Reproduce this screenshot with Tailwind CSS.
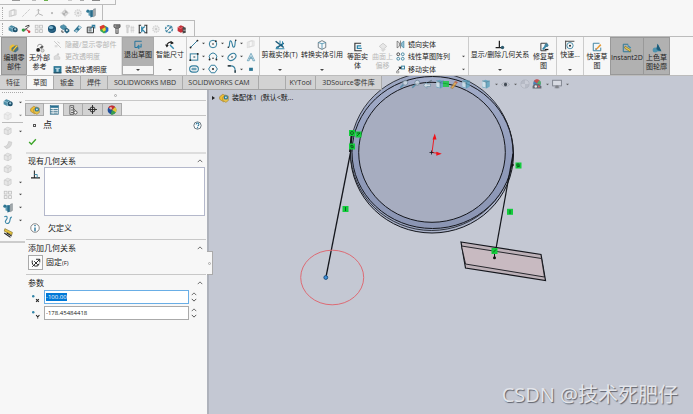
<!DOCTYPE html>
<html lang="zh-CN">
<head>
<meta charset="utf-8">
<title>SOLIDWORKS 草图</title>
<script src="https://cdn.jsdelivr.net/npm/@tailwindcss/browser@4"></script>
</head>
<body class="h-screen overflow-hidden flex flex-col bg-[#f7f7f7] text-[#222] font-['Open_Sans','Noto_Sans_CJK_SC',sans-serif] text-[7px] leading-[10px]">

<svg class="hidden" aria-hidden="true">
  <defs>
    <symbol id="asm" viewBox="0 0 16 16"><path d="M1 5l4-3 6 2v6l-4 3-6-3z" fill="#4b8ca5"/><path d="M1 5l6 2 4-3M7 7v6" stroke="#b9dbe8" fill="none"/><circle cx="11.500" cy="9" r="4" fill="#1d506b"/><circle cx="11.500" cy="8.500" r="1.800" fill="#9cc8d9"/></symbol>
    <symbol id="asmg" viewBox="0 0 16 16"><path d="M2 5l5-3 6 2v7l-5 3-6-2z" fill="#e6e6e6" stroke="#c6c6c6"/><path d="M2 5l6 2 5-3M8 7v7" stroke="#c6c6c6" fill="none"/></symbol>
    <symbol id="wedge" viewBox="0 0 16 16"><path d="M2 12c4 0 6-3 7-8l5 1c0 6-4 10-9 10z" fill="#d9d9d9" stroke="#c4c4c4"/></symbol>
    <symbol id="mate" viewBox="0 0 16 16"><path d="M14 3L8 8 2 9M4 12l5-4" stroke="#555" stroke-width="1.600" fill="none"/><circle cx="3.500" cy="9.500" r="2.400" fill="#2c9f3f"/><path d="M7 4l6-2" stroke="#333" stroke-width="1.600"/><path d="M9 9l5 4" stroke="#d6333b" stroke-width="2"/><circle cx="13" cy="12.500" r="2" fill="#d6333b"/></symbol>
    <symbol id="gridg" viewBox="0 0 16 16"><g fill="#f1f1f1" stroke="#bfbfbf" stroke-width="1.300"><rect x="2" y="2" width="4.500" height="4.500"/><rect x="9" y="2" width="4.500" height="4.500"/><rect x="2" y="9" width="4.500" height="4.500"/><rect x="9" y="9" width="4.500" height="4.500"/></g></symbol>
    <symbol id="fastg" viewBox="0 0 16 16"><path d="M2 2h5v3H5v9H3V5H2z" fill="#dedede" stroke="#c0c0c0"/><path d="M10 3v11M13 3v11M9 6h6M9 10h6" stroke="#c4c4c4"/></symbol>
    <symbol id="globe" viewBox="0 0 16 16"><circle cx="8" cy="8" r="6.500" fill="#1a5273"/><ellipse cx="6.500" cy="5.500" rx="3.500" ry="2.500" fill="#79b4cf"/><path d="M2 10q6 4 12-2" stroke="#4b89a9" fill="none"/></symbol>
    <symbol id="parts" viewBox="0 0 16 16"><path d="M1 3l5-2 4 3v3l-5 2-4-3z" fill="#4f93ad" stroke="#2c6681" stroke-width=".8"/><path d="M7 8l4-2 4 3v3l-4 3-4-3z" fill="#24607d"/><path d="M3 10v3h3" fill="none" stroke="#333" stroke-width="1.400"/><circle cx="11" cy="10" r="1.500" fill="#d9e9ef"/></symbol>
    <symbol id="clip" viewBox="0 0 16 16"><path d="M1 11l8-9 5 3-8 9z" fill="#2e7391"/><circle cx="10.500" cy="5.500" r="2" fill="#cfe6ef"/><circle cx="5.500" cy="11" r="2" fill="#a8cad8"/></symbol>
    <symbol id="boxarr" viewBox="0 0 16 16"><path d="M2 5h10v9H2z" fill="#e4eef2" stroke="#333" stroke-width="1.500"/><path d="M4 8h5M4 11h5" stroke="#333" stroke-width="1.300"/><path d="M7 7l6-5M9 2h5v5" stroke="#27789c" stroke-width="1.700" fill="none"/></symbol>
    <symbol id="heat" viewBox="0 0 16 16"><path d="M2 5l6-3 6 3v6l-6 4-6-4z" fill="#35a853"/><path d="M1 4l6-3 4 4-9 4z" fill="#dc3a2d"/><path d="M11 5l4 1v5l-5 4z" fill="#2769c9"/><path d="M5 8l5-3 1 5-4 2z" fill="#f0d532"/></symbol>
    <symbol id="bolt" viewBox="0 0 16 16"><path d="M3 1h10v4l-3 2v8H6V7L3 5z" fill="#777" stroke="#444"/><path d="M6 9h4M6 11h4M6 13h4" stroke="#ddd"/><path d="M5 2v3" stroke="#ccc"/></symbol>
    <symbol id="meas" viewBox="0 0 16 16"><path d="M2 1v14M1 2h4M1 14h4M14 1v14M10 2h5M10 14h5" stroke="#333" stroke-width="1.700" fill="none"/><path d="M11 4L6 8l5 5M6 4v9" stroke="#2d83a8" stroke-width="2" fill="none"/></symbol>
    <symbol id="gearg" viewBox="0 0 16 16"><circle cx="8" cy="8" r="5" fill="#ececec" stroke="#d0d0d0" stroke-width="2" stroke-dasharray="2 1"/><circle cx="8" cy="8" r="1.800" fill="#c9c9c9"/></symbol>
    <symbol id="gearb" viewBox="0 0 16 16"><circle cx="8" cy="8" r="5.500" fill="none" stroke="#3b85a4" stroke-width="2.200" stroke-dasharray="4 1.500"/><path d="M5 11l6-6M8 5h3v3" stroke="#2d6f8e" stroke-width="1.300" fill="none"/></symbol>
    <symbol id="redbox" viewBox="0 0 16 16"><path d="M1 5l5-3 5 2v8l-5 2-5-3z" fill="#c82f38"/><path d="M1 5l5 2 5-3" stroke="#f0a0a4" fill="none"/><path d="M9 4l5 2v8l-5 1z" fill="#4a4a4a"/><path d="M10 10h4" stroke="#eee"/></symbol>
    <symbol id="planeg" viewBox="0 0 16 16"><path d="M2 5l8-3v9l-8 3zM5 4v9l8-2V3z" fill="#e6e6e6" stroke="#c0c0c0"/></symbol>
    <symbol id="lineg" viewBox="0 0 16 16"><path d="M2 14L14 2" stroke="#b5b5b5" stroke-dasharray="5 1"/></symbol>
    <symbol id="axisg" viewBox="0 0 16 16"><path d="M7 2v7l-5 4M7 9l7 3M5 4l2-2 2 2" stroke="#b0b0b0" stroke-width="1.500" fill="none"/></symbol>
    <symbol id="dotg" viewBox="0 0 16 16"><circle cx="8" cy="8" r="1.800" fill="#b7b7b7"/></symbol>
    <symbol id="crossg" viewBox="0 0 16 16"><circle cx="8" cy="8" r="4" fill="#e4e4e4" stroke="#b8b8b8"/><path d="M8 1v14M1 8h14" stroke="#c4c4c4"/><path d="M8 8V4a4 4 0 0 1 4 4zM8 8v4a4 4 0 0 1-4-4z" fill="#b2b2b2"/></symbol>
    <symbol id="matebl" viewBox="0 0 16 16"><path d="M4 4l5-1v10l-5-1z" fill="#5d9db6"/><path d="M7 4l4-1v11l-4 1z" fill="#2a6c8a"/><path d="M12 2l3-1v11l-3 2z" fill="#a5adb1" stroke="#6d767b" stroke-width=".8"/><circle cx="3" cy="5" r="2.500" fill="#2e7592"/></symbol>
    <symbol id="edit" viewBox="0 0 16 16"><path d="M1 5l5-3 6 3v6l-6 3-5-3z" fill="#edbf38"/><path d="M4 8l6-4 5 3v4l-5 4-6-3z" fill="#47748a"/><path d="M5 12l7-9 2 2-7 8z" fill="#f3cd49" stroke="#7d681f" stroke-width=".7"/></symbol>
    <symbol id="noext" viewBox="0 0 16 16"><path d="M4 6q0-4 4-4t4 4" fill="none" stroke="#999" stroke-width="1.500"/><path d="M7 8l4-4 3 2-3 3" fill="#555"/><circle cx="5" cy="11" r="3" fill="#222"/><circle cx="12" cy="12" r="2.500" fill="#ddd" stroke="#888"/></symbol>
    <symbol id="hideg" viewBox="0 0 16 16"><path d="M2 2l12 12M8 3l4 3" stroke="#c4c4c4" stroke-width="1.600"/><path d="M3 9h5v4H3z" fill="#ddd"/></symbol>
    <symbol id="transg" viewBox="0 0 16 16"><path d="M2 13V8l5-3 5 4v4z" fill="#ddd" stroke="#c5c5c5"/><circle cx="9" cy="4" r="2" fill="#ccc"/></symbol>
    <symbol id="transb" viewBox="0 0 16 16"><rect x="1" y="2" width="14" height="12" fill="#2a7593"/><path d="M4 5h8v2h-2v5H6V7H4z" fill="#b4d3df"/><path d="M1 14h14" stroke="#184257" stroke-width="2"/></symbol>
    <symbol id="exit" viewBox="0 0 16 16"><path d="M14 2H3v10h4" stroke="#27739a" stroke-width="1.600" fill="none"/><path d="M13 6v5H8M10 8l-3 3 3 3" stroke="#3182a8" stroke-width="1.800" fill="none"/></symbol>
    <symbol id="dim" viewBox="0 0 16 16"><path d="M3 10A6 6 0 0 1 13 5" stroke="#222" stroke-width="1.800" fill="none"/><path d="M9 1l5 4-5 2zM0 7l3 5 3-4z" fill="#222"/><path d="M8 8l6 6" stroke="#348bb0" stroke-width="2.200"/></symbol>
    <symbol id="sline" viewBox="0 0 16 16"><path d="M2 14L14 2" stroke="#2c7596" stroke-width="1.500"/><circle cx="2.500" cy="13.500" r="1.500" fill="#222"/><circle cx="13.500" cy="2.500" r="1.500" fill="#222"/></symbol>
    <symbol id="scirc" viewBox="0 0 16 16"><circle cx="8" cy="8" r="6" fill="none" stroke="#347f9e" stroke-width="1.600"/><circle cx="8" cy="8" r="1.300" fill="#222"/><circle cx="12.500" cy="3.500" r="1.400" fill="#222"/></symbol>
    <symbol id="sspl" viewBox="0 0 16 16"><path d="M2 13C5 14 3 2 6 3s2 11 5 10 1-9 3-11" fill="none" stroke="#347f9e" stroke-width="1.700"/><circle cx="2" cy="13" r="1.200" fill="#222"/><circle cx="14" cy="2" r="1.200" fill="#222"/></symbol>
    <symbol id="srect" viewBox="0 0 16 16"><rect x="2" y="3" width="12" height="10" fill="none" stroke="#347f9e" stroke-width="1.600"/><path d="M7 7h3v2H7z" fill="#3c6679"/><circle cx="2" cy="13" r="1.500" fill="#222"/><circle cx="14" cy="3" r="1.500" fill="#222"/></symbol>
    <symbol id="sarc" viewBox="0 0 16 16"><path d="M3 11A6 6 0 1 1 13 11" fill="none" stroke="#347f9e" stroke-width="1.600"/><circle cx="2.500" cy="12" r="1.500" fill="#222"/><circle cx="13.500" cy="12" r="1.500" fill="#222"/><circle cx="8" cy="10" r="1.200" fill="#222"/></symbol>
    <symbol id="sell" viewBox="0 0 16 16"><ellipse cx="8" cy="8" rx="7" ry="4.800" transform="rotate(-35 8 8)" fill="none" stroke="#347f9e" stroke-width="1.700"/><circle cx="8" cy="8" r="1.200" fill="#222"/></symbol>
    <symbol id="sslot" viewBox="0 0 16 16"><rect x="1" y="3" width="14" height="10" rx="5" fill="none" stroke="#347f9e" stroke-width="1.700"/><rect x="4" y="6" width="8" height="4" rx="1" fill="#6ea2b8"/></symbol>
    <symbol id="spoly" viewBox="0 0 16 16"><path d="M5 2h6l4 6-4 6H5L1 8z" fill="none" stroke="#347f9e" stroke-width="1.600"/><circle cx="8" cy="8" r="1.700" fill="#333"/></symbol>
    <symbol id="sfil" viewBox="0 0 16 16"><path d="M2 3h4q7 0 7 7v4" fill="none" stroke="#347f9e" stroke-width="1.700"/><path d="M1 3h5M13 10v4" stroke="#222" stroke-width="1.800"/></symbol>
    <symbol id="stext" viewBox="0 0 16 16"><path d="M2 14L8 2l6 12h-3L8 7l-3 7zM5 10h6" fill="#dceaf0" stroke="#468ba8"/></symbol>
    <symbol id="spt" viewBox="0 0 16 16"><rect x="5" y="6" width="6" height="5" fill="#2a7593"/></symbol>
    <symbol id="trim" viewBox="0 0 16 16"><path d="M1 2l13 10M2 13l12-8" stroke="#1e5a77" stroke-width="2.500"/><path d="M8 1v7M12 2v8M1 14h14" stroke="#3288ad" stroke-width="1.600"/><circle cx="4" cy="12" r="2" fill="#3788a8"/></symbol>
    <symbol id="cube" viewBox="0 0 16 16"><path d="M2 4l6-3 6 3v8l-6 3-6-3z" fill="#f5f8fa" stroke="#5c6a71" stroke-width="1.300"/><path d="M2 4l6 2v9M8 6l6-2" fill="none" stroke="#4a90ae" stroke-width="1.300"/></symbol>
    <symbol id="cubeb" viewBox="0 0 16 16"><path d="M2 3l5-2 7 2v9l-5 3-7-2z" fill="#5aa3bf"/><path d="M2 3l6 2v9l-6-2z" fill="#d5e8ef"/><path d="M2 3l6 2 6-2M8 5v9" stroke="#376e84" fill="none"/></symbol>
    <symbol id="offs" viewBox="0 0 16 16"><path d="M13 2H3v12h11" stroke="#333" stroke-width="1.800" fill="none"/><path d="M13 6H7v4h7" stroke="#2f86ab" stroke-width="2" fill="none"/></symbol>
    <symbol id="surfg" viewBox="0 0 16 16"><path d="M2 7l6-5 6 5-6 5zM5 12l3 3 4-4" fill="#e7e7e7" stroke="#c9c9c9" stroke-width="1.400"/></symbol>
    <symbol id="mirr" viewBox="0 0 16 16"><path d="M2 2l4 3v6l-4 3z" fill="#eee" stroke="#555" stroke-width="1.200"/><path d="M14 2l-4 3v6l4 3z" fill="#9dc6d8" stroke="#347f9e" stroke-width="1.200"/><path d="M8 1v14" stroke="#333"/></symbol>
    <symbol id="patt" viewBox="0 0 16 16"><g fill="none" stroke-width="1.500"><circle cx="4" cy="4" r="2.500" stroke="#333"/><g stroke="#347f9e"><circle cx="12" cy="4" r="2.500"/><circle cx="4" cy="12" r="2.500"/><circle cx="12" cy="12" r="2.500"/></g></g></symbol>
    <symbol id="move" viewBox="0 0 16 16"><rect x="10" y="2" width="5" height="5" fill="#fff" stroke="#347f9e" stroke-width="1.800"/><path d="M3 10l4-5" stroke="#222" stroke-width="1.600"/><path d="M4 3h5v5z" fill="#222"/><path d="M1 11h4v3H1z" fill="none" stroke="#777" stroke-width="1.200"/></symbol>
    <symbol id="rel" viewBox="0 0 16 16"><path d="M7 1v11M1 12h10" stroke="#222" stroke-width="2"/><circle cx="12" cy="12" r="2.700" fill="#2e5c70"/></symbol>
    <symbol id="repair" viewBox="0 0 16 16"><path d="M13 2H3v12h9" stroke="#333" stroke-width="1.500" fill="none"/><path d="M6 12l6-7" stroke="#2e83a8" stroke-width="3"/><circle cx="12" cy="5" r="3" fill="#44839e"/><path d="M9 12h6" stroke="#222" stroke-width="2"/></symbol>
    <symbol id="snap" viewBox="0 0 16 16"><path d="M1 1v14M1 2h14" stroke="#333" stroke-width="1.400"/><circle cx="8" cy="9" r="5" fill="none" stroke="#3a85a4" stroke-width="1.400"/><circle cx="8" cy="9" r="1.600" fill="#222"/></symbol>
    <symbol id="rapid" viewBox="0 0 16 16"><path d="M12 2H2v12h12V9" stroke="#387f9d" stroke-width="1.500" fill="#f2f7fa"/><path d="M6 11l7-8 2 2-7 7z" fill="#e99a32"/><path d="M5 12l1-2 2 2z" fill="#222"/></symbol>
    <symbol id="inst" viewBox="0 0 16 16"><path d="M10 2H2v12h12v-2" stroke="#2e7998" stroke-width="1.600" fill="none"/><path d="M5 5l9 6-1 3-9-6z" fill="#eed04b" stroke="#6c622c"/><path d="M9 4l5 4" stroke="#348db3" stroke-width="2"/></symbol>
    <symbol id="shade" viewBox="0 0 16 16"><path d="M9 1l6 12H6z" fill="#2f7f9f"/><circle cx="5" cy="11" r="4" fill="#4f94af"/><path d="M9 1l-2 9 8 3" fill="#1d5b79"/></symbol>
    <symbol id="tree" viewBox="0 0 16 16"><path d="M1 6l5-4 4 2v8l-3 2-6-4z" fill="#edbd35" stroke="#a68028"/><path d="M6 7l4-4 5 2v7l-4 3-5-3z" fill="#e8c34b" stroke="#8d6f24" stroke-width=".7"/><circle cx="11" cy="7" r="3.500" fill="#2c7898"/><circle cx="11" cy="7" r="1.400" fill="#d8ecf3"/></symbol>
    <symbol id="props" viewBox="0 0 16 16"><rect x="2" y="1" width="13" height="14" fill="#fff" stroke="#2b6987"/><path d="M2 3h13" stroke="#276f91" stroke-width="3"/><path d="M2 7h4M2 10h4M2 13h4M7 7h7M7 10h7M7 13h7" stroke="#24607d" stroke-width="1.400"/></symbol>
    <symbol id="conf" viewBox="0 0 16 16"><path d="M3 1h6v14H3z" fill="#ddd" stroke="#555" stroke-width="1.300"/><path d="M5 4h2l5 5M5 8h3M5 12h3" stroke="#444" stroke-width="1.300" fill="none"/><circle cx="12" cy="12" r="2.500" fill="#fff" stroke="#444" stroke-width="1.300"/></symbol>
    <symbol id="target" viewBox="0 0 16 16"><circle cx="8" cy="8" r="4.500" fill="none" stroke="#222" stroke-width="1.600"/><path d="M8 0v16M0 8h16" stroke="#222" stroke-width="1.600"/></symbol>
    <symbol id="ball" viewBox="0 0 16 16"><circle cx="8" cy="8" r="7" fill="#1f4e9b"/><path d="M8 8L2 4a7 7 0 0 1 11-1z" fill="#c92f2f"/><path d="M8 8l5-5a7 7 0 0 1 1 9z" fill="#e8c832"/><path d="M8 8l6 4a7 7 0 0 1-8 3z" fill="#38a04c"/><circle cx="6" cy="5" r="2" fill="#f1e1dc" opacity=".7"/></symbol>
    <symbol id="scene" viewBox="0 0 16 16"><circle cx="8" cy="7" r="6" fill="#2d72b0"/><path d="M8 7L3 3a6 6 0 0 1 9-1z" fill="#c9352f"/><path d="M8 7l4-5a6 6 0 0 1 1 8z" fill="#40a550"/><path d="M1 15v-4l3-3h7l4 4v3z" fill="#4d525c"/><circle cx="6" cy="12" r="2" fill="#eee"/><circle cx="11" cy="12" r="1.500" fill="#e44"/></symbol>
    <symbol id="ballg" viewBox="0 0 16 16"><circle cx="8" cy="8" r="6.500" fill="#b4b8c3" stroke="#a4a8b4"/><path d="M8 8V2a6 6 0 0 1 6 6zM8 8v6a6 6 0 0 1-6-6z" fill="#cbced7"/></symbol>
    <symbol id="mag" viewBox="0 0 16 16"><path d="M2 14l5-5" stroke="#4a8aa5" stroke-width="2.600"/><circle cx="10" cy="6" r="4" fill="#cfdbe5" stroke="#708a99" stroke-width="1.500"/></symbol>
    <symbol id="prev" viewBox="0 0 16 16"><path d="M1 10l5-5v3h6v4H6v3z" fill="#dce7ed" stroke="#57879b"/><path d="M9 5l5-3" stroke="#5c6d78" stroke-width="2"/></symbol>
    <symbol id="pen" viewBox="0 0 16 16"><path d="M3 14L11 2l4 2-8 11z" fill="#eda83e" stroke="#8c6937"/><path d="M11 2l4 2-1 2-4-2z" fill="#c64f42"/></symbol>
    <symbol id="eye" viewBox="0 0 16 16"><path d="M1 8q7-7 14 0-7 7-14 0z" fill="#dfe3ea" stroke="#747984"/><circle cx="8" cy="8" r="3" fill="#222c38"/></symbol>
    <symbol id="mon" viewBox="0 0 16 16"><rect x="1" y="2" width="14" height="9" fill="#dde0e7" stroke="#666b75" stroke-width="1.400"/><path d="M6 11h4v3H6zM4 14h8" stroke="#666b75" fill="#777"/></symbol>
    <symbol id="curve" viewBox="0 0 16 16"><path d="M2 3c5-3 6 2 3 5s0 7 4 5 0-8 5-10" fill="none" stroke="#3d88a8" stroke-width="1.800"/></symbol>
    <symbol id="ruler" viewBox="0 0 16 16"><path d="M3 1l12 6-1 4L2 5z" fill="#e8c63d" stroke="#776720"/><path d="M2 8l10 7M6 8l8 5" stroke="#222" stroke-width="1.800"/></symbol>
    <symbol id="perp" viewBox="0 0 16 16"><path d="M6 1v13M0 14h16" stroke="#222" stroke-width="1.800"/><path d="M6 8h5v6" stroke="#3484a4" stroke-width="1.600" fill="none"/></symbol>
    <symbol id="info" viewBox="0 0 16 16"><circle cx="8" cy="8" r="6.800" fill="#fff" stroke="#555" stroke-width="1.100"/><path d="M8 7v6M8 3v2" stroke="#28749a" stroke-width="2.200"/></symbol>
    <symbol id="help" viewBox="0 0 16 16"><circle cx="8" cy="8" r="6.500" fill="#fff" stroke="#4b5962" stroke-width="1.400"/><path d="M5.500 6q0-2.500 2.500-2.500T10.500 6 8 9" fill="none" stroke="#2c789c" stroke-width="1.800"/><circle cx="8" cy="12" r="1.200" fill="#2c789c"/></symbol>
    <symbol id="check" viewBox="0 0 16 16"><path d="M2 9l4 4 8-9" fill="none" stroke="#3fa62c" stroke-width="2.400"/></symbol>
    <symbol id="fix" viewBox="0 0 16 16"><path d="M2 4q-1 8 5 9 5 1 6-4" fill="none" stroke="#222" stroke-width="1.600"/><path d="M2 14L14 2M8 2h6v5M5 5l6 6" stroke="#222" stroke-width="1.500" fill="none"/></symbol>
    <symbol id="px" viewBox="0 0 16 16"><circle cx="4" cy="4" r="2.200" fill="#3385a8"/><path d="M9 9l5 5M14 9l-5 5" stroke="#222" stroke-width="1.800"/></symbol>
    <symbol id="py" viewBox="0 0 16 16"><circle cx="4" cy="4" r="2.200" fill="#3385a8"/><path d="M9 9l3 3 3-3M12 12v3" stroke="#222" stroke-width="1.800" fill="none"/></symbol>
    <symbol id="up" viewBox="0 0 16 16"><path d="M2 11l6-6 6 6" fill="none" stroke="#444" stroke-width="2"/></symbol>
    <symbol id="down" viewBox="0 0 16 16"><path d="M2 5l6 6 6-6" fill="none" stroke="#444" stroke-width="2.400"/></symbol>
    <symbol id="arr" viewBox="0 0 4 4"><path d="M0 1h4L2 3z" fill="#444"/></symbol>
  </defs>
</svg>

<header class="shrink-0">
  <div class="w-[116px] h-[5px] border-b border-r border-[#bbb] flex items-start gap-2 pl-3" aria-hidden="true">
    <i class="w-2 h-px bg-[#999]"></i><i class="w-1 h-px bg-[#bbb] ml-1"></i><i class="w-1 h-px bg-[#6ab04c]"></i><i class="w-1 h-px bg-[#ccc] ml-3"></i><i class="w-1 h-px bg-[#aaa]"></i><i class="w-2 h-px bg-[#888]"></i>
  </div>
  <nav aria-label="参考几何体" class="w-[103px] h-[15px] border-r border-[#bbb] flex items-center gap-[3px] pl-[2px]">
    <i class="h-3 border-l border-dotted border-[#aaa] mr-[2px]"></i>
    <button aria-label="基准面"><svg class="size-[10px]"><use href="#planeg"/></svg></button>
    <button aria-label="基准轴"><svg class="size-[10px]"><use href="#lineg"/></svg></button>
    <button aria-label="坐标系"><svg class="size-[10px]"><use href="#axisg"/></svg></button>
    <button aria-label="点"><svg class="size-[10px]"><use href="#dotg"/></svg></button>
    <button aria-label="质心"><svg class="size-[10px]"><use href="#crossg"/></svg></button>
    <button aria-label="边界框"><svg class="size-[10px]"><use href="#gearg"/></svg></button>
    <button aria-label="配合参考"><svg class="size-[10px]"><use href="#matebl"/></svg></button>
  </nav>
  <nav aria-label="装配体" class="w-[195px] h-[16px] border-t border-r border-[#bbb] flex items-center gap-[3px] pl-[2px]">
    <i class="h-3 border-l border-dotted border-[#aaa] mr-[2px]"></i>
    <button aria-label="插入零部件"><svg class="size-[10px]"><use href="#asm"/></svg></button>
    <button aria-label="配合"><svg class="size-[10px]"><use href="#mate"/></svg></button>
    <button aria-label="阵列"><svg class="size-[10px]"><use href="#gridg"/></svg></button>
    <button aria-label="智能扣件"><svg class="size-[10px]"><use href="#globe"/></svg></button>
    <button aria-label="移动零部件"><svg class="size-[10px]"><use href="#parts"/></svg></button>
    <button aria-label="显示隐藏"><svg class="size-[10px]"><use href="#clip"/></svg></button>
    <button aria-label="爆炸视图"><svg class="size-[10px]"><use href="#boxarr"/></svg></button>
    <button aria-label="可视化"><svg class="size-[10px]"><use href="#heat"/></svg></button>
    <button aria-label="扣件"><svg class="size-[10px]"><use href="#bolt"/></svg></button>
    <button aria-label="间隙"><svg class="size-[10px]"><use href="#fastg"/></svg></button>
    <button aria-label="测量"><svg class="size-[10px]"><use href="#meas"/></svg></button>
    <button aria-label="设置"><svg class="size-[10px]"><use href="#gearg"/></svg></button>
    <button aria-label="运动算例"><svg class="size-[10px]"><use href="#gearb"/></svg></button>
    <button aria-label="干涉检查"><svg class="size-[10px]"><use href="#redbox"/></svg></button>
  </nav>
</header>

<section aria-label="草图工具" class="shrink-0 h-[40px] border-y border-[#bcbcbc] flex text-center leading-[9px] overflow-hidden">
  <button class="ml-px w-[26px] shrink-0 bg-[#b1b1b1] border border-[#999] flex flex-col items-center pt-[5px]"><svg class="size-[10px] shrink-0"><use href="#edit"/></svg><span>编辑零<br>部件</span></button>
  <button class="w-[25px] shrink-0 flex flex-col items-center pt-[6px]"><svg class="size-[10px] shrink-0"><use href="#noext"/></svg><span>无外部<br>参考</span></button>
  <div class="w-[70px] shrink-0 border-r border-[#ddd] flex flex-col items-start pt-px pl-px">
    <button class="h-[12px] flex items-center gap-[3px] text-[#b5b5b5]"><svg class="size-[9px]"><use href="#hideg"/></svg>隐藏/显示零部件</button>
    <button class="h-[13px] flex items-center gap-[3px] text-[#b5b5b5]"><svg class="size-[9px]"><use href="#transg"/></svg>更改透明度</button>
    <button class="h-[12px] flex items-center gap-[3px]"><svg class="size-[9px]"><use href="#transb"/></svg>装配体透明度</button>
  </div>
  <button class="w-[32px] shrink-0 border border-[#aaa] flex flex-col items-center justify-between"><span class="w-full h-[28px] bg-[#b1b1b1] pt-[2px] flex flex-col items-center"><svg class="size-[10px] shrink-0"><use href="#exit"/></svg><span>退出草图</span></span><svg class="size-[4px] mb-[2px]"><use href="#arr"/></svg></button>
  <button class="w-[33px] shrink-0 border-r border-[#ccc] flex flex-col items-center pt-[3px]"><svg class="size-[10px] shrink-0"><use href="#dim"/></svg><span>智能尺寸</span><svg class="size-[4px] mt-auto mb-[3px]"><use href="#arr"/></svg></button>
  <div class="w-[73px] shrink-0 border-r border-[#ccc] pl-[2px] grid grid-cols-[10px_9px_10px_9px_10px_9px_10px] grid-rows-[13px_13px_12px] items-center">
    <button aria-label="直线"><svg class="size-[10px]"><use href="#sline"/></svg></button><svg class="size-[3px] ml-[3px]"><use href="#arr"/></svg>
    <button aria-label="圆"><svg class="size-[10px]"><use href="#scirc"/></svg></button><svg class="size-[3px] ml-[3px]"><use href="#arr"/></svg>
    <button aria-label="样条曲线"><svg class="size-[10px]"><use href="#sspl"/></svg></button><svg class="size-[3px] ml-[3px]"><use href="#arr"/></svg>
    <button aria-label="草图基准面" class="opacity-60"><svg class="size-[10px]"><use href="#planeg"/></svg></button>
    <button aria-label="矩形"><svg class="size-[10px]"><use href="#srect"/></svg></button><svg class="size-[3px] ml-[3px]"><use href="#arr"/></svg>
    <button aria-label="圆弧"><svg class="size-[10px]"><use href="#sarc"/></svg></button><svg class="size-[3px] ml-[3px]"><use href="#arr"/></svg>
    <button aria-label="椭圆"><svg class="size-[10px]"><use href="#sell"/></svg></button><svg class="size-[3px] ml-[3px]"><use href="#arr"/></svg>
    <button aria-label="文字"><svg class="size-[10px]"><use href="#stext"/></svg></button>
    <button aria-label="槽口"><svg class="size-[10px]"><use href="#sslot"/></svg></button><svg class="size-[3px] ml-[3px]"><use href="#arr"/></svg>
    <button aria-label="多边形"><svg class="size-[10px]"><use href="#spoly"/></svg></button><span></span>
    <button aria-label="圆角"><svg class="size-[10px]"><use href="#sfil"/></svg></button><svg class="size-[3px] ml-[3px]"><use href="#arr"/></svg>
    <button aria-label="点"><svg class="size-[10px]"><use href="#spt"/></svg></button>
  </div>
  <button class="w-[39px] shrink-0 flex flex-col items-center pt-[3px]"><svg class="size-[10px] shrink-0"><use href="#trim"/></svg><span class="whitespace-nowrap">剪裁实体(T)</span><svg class="size-[4px] mt-auto mb-[3px]"><use href="#arr"/></svg></button>
  <button class="w-[46px] shrink-0 flex flex-col items-center pt-[3px]"><svg class="size-[10px] shrink-0"><use href="#cube"/></svg><span class="whitespace-nowrap">转换实体引用</span><svg class="size-[4px] mt-auto mb-[3px]"><use href="#arr"/></svg></button>
  <button class="w-[25px] shrink-0 flex flex-col items-center pt-[5px]"><svg class="size-[10px] shrink-0"><use href="#offs"/></svg><span>等距实<br>体</span></button>
  <button class="w-[25px] shrink-0 flex flex-col items-center pt-[5px] text-[#b9b9b9]"><svg class="size-[10px] shrink-0"><use href="#surfg"/></svg><span>曲面上<br>偏移</span></button>
  <div class="w-[74px] shrink-0 border-r border-[#ccc] flex flex-col pt-px pl-px pr-[3px]">
    <button class="h-[12px] flex items-center gap-[3px]"><svg class="size-[9px]"><use href="#mirr"/></svg>镜向实体</button>
    <button class="h-[13px] flex items-center gap-[3px]"><svg class="size-[9px]"><use href="#patt"/></svg>线性草图阵列<svg class="size-[3px] ml-auto"><use href="#arr"/></svg></button>
    <button class="h-[12px] flex items-center gap-[3px]"><svg class="size-[9px]"><use href="#move"/></svg>移动实体<svg class="size-[3px] ml-auto"><use href="#arr"/></svg></button>
  </div>
  <button class="w-[62px] shrink-0 flex flex-col items-center pt-[3px]"><svg class="size-[10px] shrink-0"><use href="#rel"/></svg><span class="whitespace-nowrap">显示/删除几何关系</span><svg class="size-[4px] mt-auto mb-[3px]"><use href="#arr"/></svg></button>
  <button class="w-[26px] shrink-0 border-r border-[#ccc] flex flex-col items-center pt-[5px]"><svg class="size-[10px] shrink-0"><use href="#repair"/></svg><span>修复草<br>图</span></button>
  <button class="w-[27px] shrink-0 border-r border-[#ccc] flex flex-col items-center pt-[3px]"><svg class="size-[10px] shrink-0"><use href="#snap"/></svg><span>快速...</span><svg class="size-[4px] mt-auto mb-[3px]"><use href="#arr"/></svg></button>
  <button class="w-[26px] shrink-0 flex flex-col items-center pt-[5px]"><svg class="size-[10px] shrink-0"><use href="#rapid"/></svg><span>快速草<br>图</span></button>
  <button class="w-[34px] shrink-0 bg-[#b1b1b1] border border-[#999] flex flex-col items-center pt-[5px]"><svg class="size-[10px] shrink-0"><use href="#inst"/></svg><span>Instant2D</span></button>
  <button class="w-[26px] shrink-0 bg-[#b1b1b1] border border-l-0 border-[#999] flex flex-col items-center pt-[5px]"><svg class="size-[10px] shrink-0"><use href="#shade"/></svg><span>上色草<br>图轮廓</span></button>
</section>

<main class="relative grow min-h-0 flex flex-col bg-[#c4c8d3] overflow-hidden">
  <svg class="absolute inset-0 w-full h-full" role="img" aria-label="图形区域">
    <defs>
      <linearGradient id="rim" x1="0" y1="0" x2="0" y2="1"><stop offset="0" stop-color="#a3adc9"/><stop offset=".6" stop-color="#8f9aba"/><stop offset="1" stop-color="#8b95b3"/></linearGradient>
    </defs>
    <g transform="translate(0 -76)" fill="none" stroke="#14161c">
      <ellipse cx="432" cy="154" rx="81.500" ry="79" fill="#a9b1c8"/>
      <ellipse cx="431.500" cy="151.500" rx="81" ry="79" fill="#9ca6c2" stroke-width=".8"/>
      <ellipse cx="432.500" cy="152.500" rx="80.500" ry="76" fill="url(#rim)"/>
      <ellipse cx="432" cy="152.300" rx="73.300" ry="70" fill="#a7adc0"/>
      <path d="M351 150L326 277" stroke-width="1.300"/>
      <path d="M352 130L350 152" stroke-width="2"/>
      <path d="M513 154L494.500 257" stroke-width="1.200"/>
      <circle cx="512.500" cy="165" r="1.300" fill="#111" stroke="none"/>
      <ellipse cx="332.200" cy="277.500" rx="31.500" ry="27.300" stroke="#dd6b74"/>
      <circle cx="325.800" cy="277.500" r="1.900" fill="#3e92dd" stroke="#1d4e7c"/>
      <path d="M461 242l80 12.500 4.500 26-80-12.500z" fill="#bdb1b8" stroke-width="1.200"/>
      <path d="M461.500 246l80 12.500 3 18.500-79-13z" fill="#c8bac1" stroke-width=".9"/>
      <path d="M494.500 250v7"/>
      <circle cx="494.500" cy="257.800" r="1.500" fill="#111" stroke="none"/>
      <path d="M432 152.500l2-15M432 152.500l6 .8" stroke="#ec1f25"/>
      <path d="M434.800 133.500l1.700 6h-4zM441.800 153.800l-5.500-2v4z" fill="#f01218" stroke="none"/>
      <path d="M429.500 152.500h4M431.500 150.500v4" stroke-width=".8"/>
      <g fill="#13cc3c" stroke="none">
        <rect x="349" y="130" width="6" height="6"/><rect x="355.500" y="131.500" width="6" height="6"/><rect x="349" y="143.500" width="6" height="6"/>
        <rect x="342.500" y="206" width="6" height="6"/><rect x="515.500" y="162.500" width="6" height="6"/><rect x="507" y="208.800" width="6" height="6"/><rect x="491.500" y="248" width="6" height="6"/>
      </g>
      <g stroke="#0a4e18" stroke-width=".8">
        <circle cx="352" cy="133" r="1.500"/><path d="M357 136l3-3M357 133h3M350.500 145l3 3"/><circle cx="352" cy="146.500" r="1.300"/><path d="M345.500 207v4M510 210v4M493 252.500l3-3"/><circle cx="518" cy="165" r="1.200"/><path d="M517 167l3-1"/>
      </g>
    </g>
  </svg>

  <nav aria-label="视图" class="absolute left-[399px] top-[3px] flex items-center opacity-80">
    <button aria-label="整屏显示全图"><svg class="size-[10px]"><use href="#mag"/></svg></button>
    <button aria-label="局部放大" class="ml-[2px]"><svg class="size-[10px]"><use href="#mag"/></svg></button>
    <button aria-label="上一视图" class="ml-[2px]"><svg class="size-[10px]"><use href="#prev"/></svg></button>
    <button aria-label="剖面视图" class="ml-[2px]"><svg class="size-[10px]"><use href="#cubeb"/></svg></button>
    <span class="size-[6px] bg-[#13cc3c] -ml-[2px]"></span>
    <button aria-label="草图"><svg class="size-[9px]"><use href="#pen"/></svg></button>
    <button aria-label="视图定向" class="ml-[3px]"><svg class="size-[10px]"><use href="#cubeb"/></svg></button>
    <button aria-label="显示样式" class="ml-[10px] flex items-center gap-1"><svg class="size-[10px]"><use href="#cubeb"/></svg><svg class="size-[3px]"><use href="#arr"/></svg></button>
    <button aria-label="隐藏/显示项目" class="ml-[3px] flex items-center gap-1"><svg class="size-[9px]"><use href="#eye"/></svg><svg class="size-[3px]"><use href="#arr"/></svg></button>
    <button aria-label="编辑外观" class="ml-[3px]"><svg class="size-[10px]"><use href="#ballg"/></svg></button>
    <button aria-label="应用布景" class="ml-[2px] flex items-center gap-1"><svg class="size-[10px]"><use href="#scene"/></svg><svg class="size-[3px]"><use href="#arr"/></svg></button>
    <button aria-label="视图设置" class="ml-[3px] flex items-center gap-1"><svg class="size-[10px]"><use href="#mon"/></svg><svg class="size-[3px]"><use href="#arr"/></svg></button>
  </nav>

  <nav aria-label="命令管理器" class="relative shrink-0 self-start h-[14px] flex bg-[#d2d2d2] border-b border-[#a5a5a5] text-[#333] leading-[12px]">
    <button class="w-[27px] pt-px border-r border-[#aaa]">特征</button>
    <button class="w-[27px] pt-px border-r border-[#aaa] bg-[#f7f7f7]">草图</button>
    <button class="w-[27px] pt-px border-r border-[#aaa]">钣金</button>
    <button class="w-[27px] pt-px border-r border-[#aaa]">焊件</button>
    <button class="w-[75px] pt-px border-r border-[#aaa]">SOLIDWORKS MBD</button>
    <button class="w-[76px] pt-px border-r border-[#aaa] pr-[3px]">SOLIDWORKS CAM</button>
    <span class="w-[27px] border-r border-[#aaa]"></span>
    <button class="w-[30px] pt-px border-r border-[#aaa]">KYTool</button>
    <button class="w-[66px] pt-px border-r border-[#aaa]">3DSource零件库</button>
  </nav>

  <div class="relative grow min-h-0 flex items-start">
    <nav aria-label="特征工具" class="w-[25px] shrink-0 self-stretch bg-[#f7f7f7] flex flex-col">
      <i class="border-t border-dotted border-[#aaa] mx-[2px] mt-[2px] mb-[3px]"></i>
      <button aria-label="插入零部件" class="pl-[3px] h-[13px] flex items-center gap-[6px]"><svg class="size-[10px]"><use href="#asm"/></svg><svg class="size-[3px]"><use href="#arr"/></svg></button>
      <button aria-label="实体" class="pl-[3px] h-[13px] flex items-center gap-[6px] opacity-60"><svg class="size-[10px]"><use href="#asmg"/></svg><svg class="size-[3px]"><use href="#arr"/></svg></button>
      <hr class="border-[#bbb] mx-[2px]">
      <div class="h-[114px] mt-[2px] flex flex-col justify-between pl-[3px]">
        <button aria-label="拉伸" class="h-[12px] flex items-center gap-[6px]"><svg class="size-[10px]"><use href="#asmg"/></svg><svg class="size-[3px]"><use href="#arr"/></svg></button>
        <button aria-label="旋转" class="h-[12px] flex items-center"><svg class="size-[10px]"><use href="#wedge"/></svg></button>
        <button aria-label="切除" class="h-[12px] flex items-center"><svg class="size-[10px]"><use href="#asmg"/></svg></button>
        <button aria-label="抽壳" class="h-[12px] flex items-center"><svg class="size-[10px]"><use href="#asmg"/></svg></button>
        <button aria-label="圆角" class="h-[12px] flex items-center gap-[6px]"><svg class="size-[10px]"><use href="#asmg"/></svg><svg class="size-[3px]"><use href="#arr"/></svg></button>
        <button aria-label="线性阵列" class="h-[12px] flex items-center gap-[6px]"><svg class="size-[10px]"><use href="#gridg"/></svg><svg class="size-[3px]"><use href="#arr"/></svg></button>
        <button aria-label="参考几何体" class="h-[12px] flex items-center gap-[6px]"><svg class="size-[10px]"><use href="#matebl"/></svg><svg class="size-[3px]"><use href="#arr"/></svg></button>
        <button aria-label="曲线" class="h-[12px] flex items-center gap-[6px]"><svg class="size-[10px]"><use href="#curve"/></svg><svg class="size-[3px]"><use href="#arr"/></svg></button>
        <button aria-label="测量" class="h-[12px] flex items-center"><svg class="size-[10px]"><use href="#ruler"/></svg></button>
      </div>
      <hr class="border-[#ccc] border-t-2 mt-[2px]">
    </nav>

    <aside aria-label="属性管理器" class="relative w-[184px] shrink-0 self-stretch bg-[#f7f7f7] border-r-2 border-[#aeb2bb] text-[8px]">
      <div class="h-[11px] border-b border-[#c8c8c8] mr-px flex items-center justify-center"><i class="size-[3px] rounded-full border border-[#aaa]"></i></div>
      <div class="h-[15px] pt-[2px] mr-px flex" role="tablist">
        <button role="tab" aria-label="设计树" class="w-[19px] border border-[#aaa] bg-[#d2d2d2] flex items-center justify-center"><svg class="size-[10px]"><use href="#tree"/></svg></button>
        <button role="tab" aria-label="属性" class="w-[19px] border-t border-[#bbb] flex items-center justify-center"><svg class="size-[10px]"><use href="#props"/></svg></button>
        <button role="tab" aria-label="配置" class="w-[20px] border border-[#aaa] bg-[#d2d2d2] flex items-center justify-center"><svg class="size-[10px]"><use href="#conf"/></svg></button>
        <button role="tab" aria-label="尺寸专家" class="w-[20px] border border-l-0 border-[#aaa] bg-[#d2d2d2] flex items-center justify-center"><svg class="size-[9px]"><use href="#target"/></svg></button>
        <button role="tab" aria-label="外观" class="w-[19px] border border-l-0 border-[#aaa] bg-[#d2d2d2] flex items-center justify-center"><svg class="size-[10px]"><use href="#ball"/></svg></button>
        <span class="grow border-b border-[#c4c4c4]"></span>
      </div>
      <div class="h-[18px] flex items-center pl-[8px] pr-[5px]">
        <i class="size-[3px] border border-[#555]"></i><h1 class="ml-[7px] text-[9px] leading-[10px]">点</h1>
        <button aria-label="帮助" class="ml-auto"><svg class="size-[9px]"><use href="#help"/></svg></button>
      </div>
      <button aria-label="确定" class="ml-[3px] h-[14px] flex items-center"><svg class="size-[9px]"><use href="#check"/></svg></button>

      <section class="ml-px mr-px mt-[4px] border-t-2 border-[#ddd]">
        <div class="h-[13px] flex items-center justify-between pl-[2px] pr-[3px]"><h2 id="rels-title">现有几何关系</h2><button aria-label="折叠现有几何关系"><svg class="size-[6px]"><use href="#up"/></svg></button></div>
        <div class="flex items-start pl-[5px] pr-px">
          <label for="rels" class="w-[13px] pt-[3px]"><svg class="size-[9px]"><use href="#perp"/></svg></label>
          <select id="rels" aria-labelledby="rels-title" multiple class="grow h-[49px] bg-white border border-[#b4b8cb]"></select>
        </div>
        <p class="h-[23px] flex items-center gap-[8px] pl-[4px]"><svg class="size-[10px]"><use href="#info"/></svg>欠定义</p>
      </section>
      <section class="ml-px mr-px border-t border-[#c8c8c8]">
        <div class="h-[15px] flex items-center justify-between pl-[2px] pr-[3px]"><h2>添加几何关系</h2><button aria-label="折叠添加几何关系"><svg class="size-[6px]"><use href="#up"/></svg></button></div>
        <button class="ml-[2px] flex items-center gap-[3px] h-[15px]"><span class="size-[15px] border border-[#aaa] bg-[#fcfcfc] flex items-center justify-center"><svg class="size-[10px]"><use href="#fix"/></svg></span><span>固定<span class="text-[6px]">(F)</span></span></button>
      </section>
      <section class="ml-px mr-px mt-[4px] border-t border-[#c8c8c8]">
        <div class="h-[15px] flex items-center justify-between pl-[2px] pr-[3px]"><h2>参数</h2><button aria-label="折叠参数"><svg class="size-[6px]"><use href="#up"/></svg></button></div>
        <div class="flex items-center h-[14px] pl-[5px] pr-[8px]">
          <label for="x" class="w-[13px] pt-[2px]"><svg class="size-[9px]"><use href="#px"/></svg></label>
          <input id="x" aria-label="X 坐标" value="-100.00" class="grow min-w-0 h-[14px] pl-px pb-px bg-white border border-[#69aee6] outline-none text-[6px] leading-[8px] selection:bg-[#0078d7] selection:text-white">
          <span class="w-[9px] pl-[2px] flex flex-col"><button aria-label="增大 X"><svg class="size-[6px]"><use href="#up"/></svg></button><button aria-label="减小 X"><svg class="size-[6px]"><use href="#down"/></svg></button></span>
        </div>
        <div class="flex items-center h-[14px] mt-[2px] pl-[5px] pr-[8px]">
          <label for="y" class="w-[13px] pt-[2px]"><svg class="size-[9px]"><use href="#py"/></svg></label>
          <input id="y" aria-label="Y 坐标" value="-178.45484418" class="grow min-w-0 h-[14px] pl-px pb-px bg-white border border-[#aaa] outline-none text-[6px] leading-[8px]">
          <span class="w-[9px] pl-[2px] flex flex-col"><button aria-label="增大 Y"><svg class="size-[6px]"><use href="#up"/></svg></button><button aria-label="减小 Y"><svg class="size-[6px]"><use href="#down"/></svg></button></span>
        </div>
      </section>
      <button aria-label="收起面板" class="absolute left-[182px] top-[161px] w-[6px] h-[24px] bg-[#f7f7f7] border border-l-0 border-[#aaa] flex items-center justify-center"><i class="size-[3px] rounded-full border border-[#aaa]"></i></button>
    </aside>

    <button class="ml-[2px] mt-[3px] flex items-center gap-[3px] text-[7px] text-[#111]"><svg class="size-[5px]" viewBox="0 0 5 5"><path d="M1 0l3 2-3 2z" fill="#222"/></svg><svg class="size-[10px]"><use href="#tree"/></svg><span>装配体1 &nbsp;(默认&lt;默...</span></button>
  </div>

  <p class="absolute right-[15px] bottom-[6px] text-[20px] leading-[26px] whitespace-nowrap text-[#e3e5ea] [text-shadow:1px_1px_1px_#5d616b]">CSDN @技术死肥仔</p>
</main>
<script>
  const x = document.getElementById('x');
  x.focus();
  x.select();
</script>
</body>
</html>
